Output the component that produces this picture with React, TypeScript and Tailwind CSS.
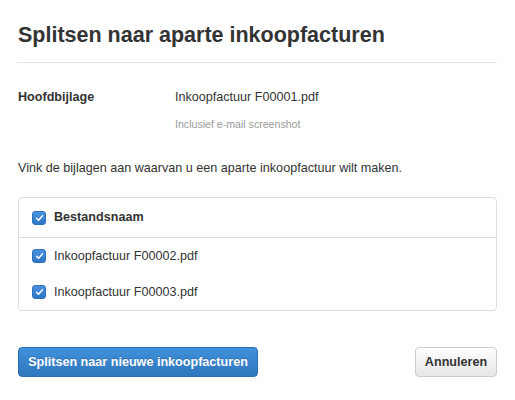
import React from 'react';

const files = ['Inkoopfactuur F00002.pdf', 'Inkoopfactuur F00003.pdf'];

const CheckBox = () => (
    <span className="flex h-[14px] w-[14px] shrink-0 items-center justify-center rounded-[3px] border border-[#2f70bd] bg-gradient-to-b from-[#4a93dd] to-[#2f77c6]">
        <svg width="9" height="8" viewBox="0 0 9 8" fill="none">
            <path d="M1.5 4.2 L3.6 6.2 L7.5 1.8" stroke="white" strokeWidth="1.4" strokeLinecap="round" strokeLinejoin="round" />
        </svg>
    </span>
);

export default function App() {
    return (
        <div className="h-[400px] w-[515px] bg-white px-[18px] text-[12.6px] text-[#333] [font-family:'Liberation_Sans',Arial,sans-serif]">
            {/* Header */}
            <h1 className="pt-[22px] pb-[14px] text-[21.5px] font-bold leading-[26px] border-b border-[#e5e5e5]">
                Splitsen naar aparte inkoopfacturen
            </h1>

            {/* Main attachment */}
            <div className="mt-[25px] flex">
                <div className="w-[157px] font-bold leading-[18px]">Hoofdbijlage</div>
                <div>
                    <div className="leading-[18px]">Inkoopfactuur F00001.pdf</div>
                    <div className="mt-[11px] text-[10.6px] leading-[14px] text-[#9a9a9a]">Inclusief e-mail screenshot</div>
                </div>
            </div>

            <p className="mt-[28px] leading-[18px]">Vink de bijlagen aan waarvan u een aparte inkoopfactuur wilt maken.</p>

            {/* Attachments table */}
            <div className="mt-[20px] rounded-[4px] border border-[#ddd]">
                <div className="flex h-[40px] items-center gap-[8px] border-b border-[#ddd] px-[13px] font-bold">
                    <CheckBox />
                    <span>Bestandsnaam</span>
                </div>
                {files.map((name) => (
                    <div key={name} className="flex h-[36px] items-center gap-[8px] px-[13px]">
                        <CheckBox />
                        <span>{name}</span>
                    </div>
                ))}
            </div>

            {/* Actions */}
            <div className="mt-[36px] flex items-center justify-between">
                <button className="h-[30px] w-[240px] rounded-[4px] border border-[#2d6fb5] bg-gradient-to-b from-[#4091dc] to-[#2f76bd] font-bold text-white [text-shadow:0_-1px_0_rgba(0,0,0,0.2)]">
                    Splitsen naar nieuwe inkoopfacturen
                </button>
                <button className="h-[30px] w-[82px] rounded-[4px] border border-[#ccc] bg-gradient-to-b from-white to-[#e6e6e6] font-bold text-[#333]">
                    Annuleren
                </button>
            </div>
        </div>
    );
}
